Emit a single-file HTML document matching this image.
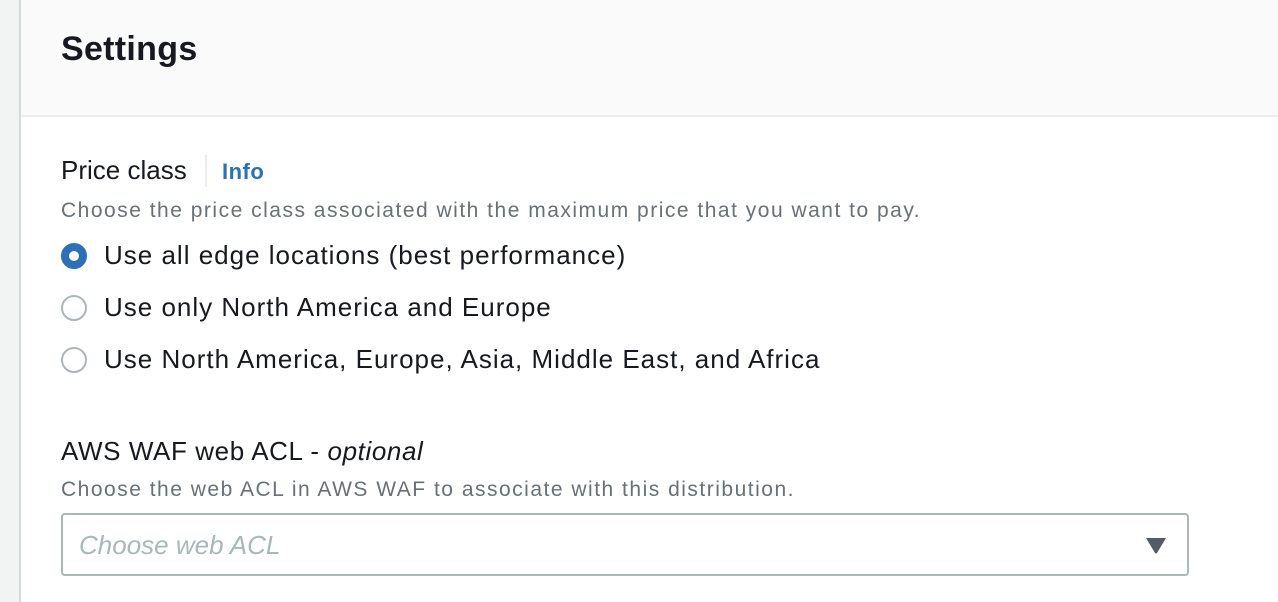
<!DOCTYPE html>
<html><head><style>
body{margin:0;width:1278px;height:602px;overflow:hidden;background:#fff;font-family:"Liberation Sans",sans-serif;position:relative;color:#16191f}
.left{position:absolute;left:0;top:0;width:19px;height:602px;background:#f2f3f3;border-right:2px solid #d5dbdb}
.hdr{position:absolute;left:21px;top:0;right:0;height:115px;background:#fafafa;border-bottom:2px solid #eaeded}
.a{position:absolute;white-space:nowrap}
.r{font-size:26px;letter-spacing:1px}
.d{font-size:21px;color:#687078;letter-spacing:1.5px}
.radio{position:absolute;left:61px;width:22px;height:22px;border:2px solid #aab7b8;border-radius:50%;background:#fff}
.radio.on{border:8px solid #2f6fb6;width:10px;height:10px}
.sel{position:absolute;left:61px;top:513px;width:1124px;height:59px;border:2px solid #aab7b8;border-radius:4px}
</style></head><body>
<div class="left"></div>
<div class="hdr"></div>
<div class="a" style="left:61px;top:30px;font-size:34px;font-weight:bold;letter-spacing:0.3px">Settings</div>
<div class="a" style="left:61px;top:155px;font-size:26px">Price class</div>
<div style="position:absolute;left:205px;top:155px;width:2px;height:32px;background:#eaeded"></div>
<div class="a" style="left:222px;top:159px;font-size:22px;font-weight:bold;color:#2a72b8;letter-spacing:0.5px">Info</div>
<div class="a d" style="left:61px;top:199px">Choose the price class associated with the maximum price that you want to pay.</div>
<div class="radio on" style="top:243px"></div>
<div class="a r" style="left:104px;top:240px">Use all edge locations (best performance)</div>
<div class="radio" style="top:295px"></div>
<div class="a r" style="left:104px;top:292px">Use only North America and Europe</div>
<div class="radio" style="top:347px"></div>
<div class="a r" style="left:104px;top:344px">Use North America, Europe, Asia, Middle East, and Africa</div>
<div class="a r" style="left:61px;top:436px;letter-spacing:0.6px">AWS WAF web ACL - <i>optional</i></div>
<div class="a d" style="left:61px;top:478px">Choose the web ACL in AWS WAF to associate with this distribution.</div>
<div class="sel"></div>
<div class="a" style="left:79px;top:530px;font-size:26px;font-style:italic;color:#aab7b8">Choose web ACL</div>
<svg style="position:absolute;left:1145px;top:537px" width="22" height="17"><path d="M1 1H21L12 16Q11 17 10 16Z" fill="#545b64"/></svg>
</body></html>
